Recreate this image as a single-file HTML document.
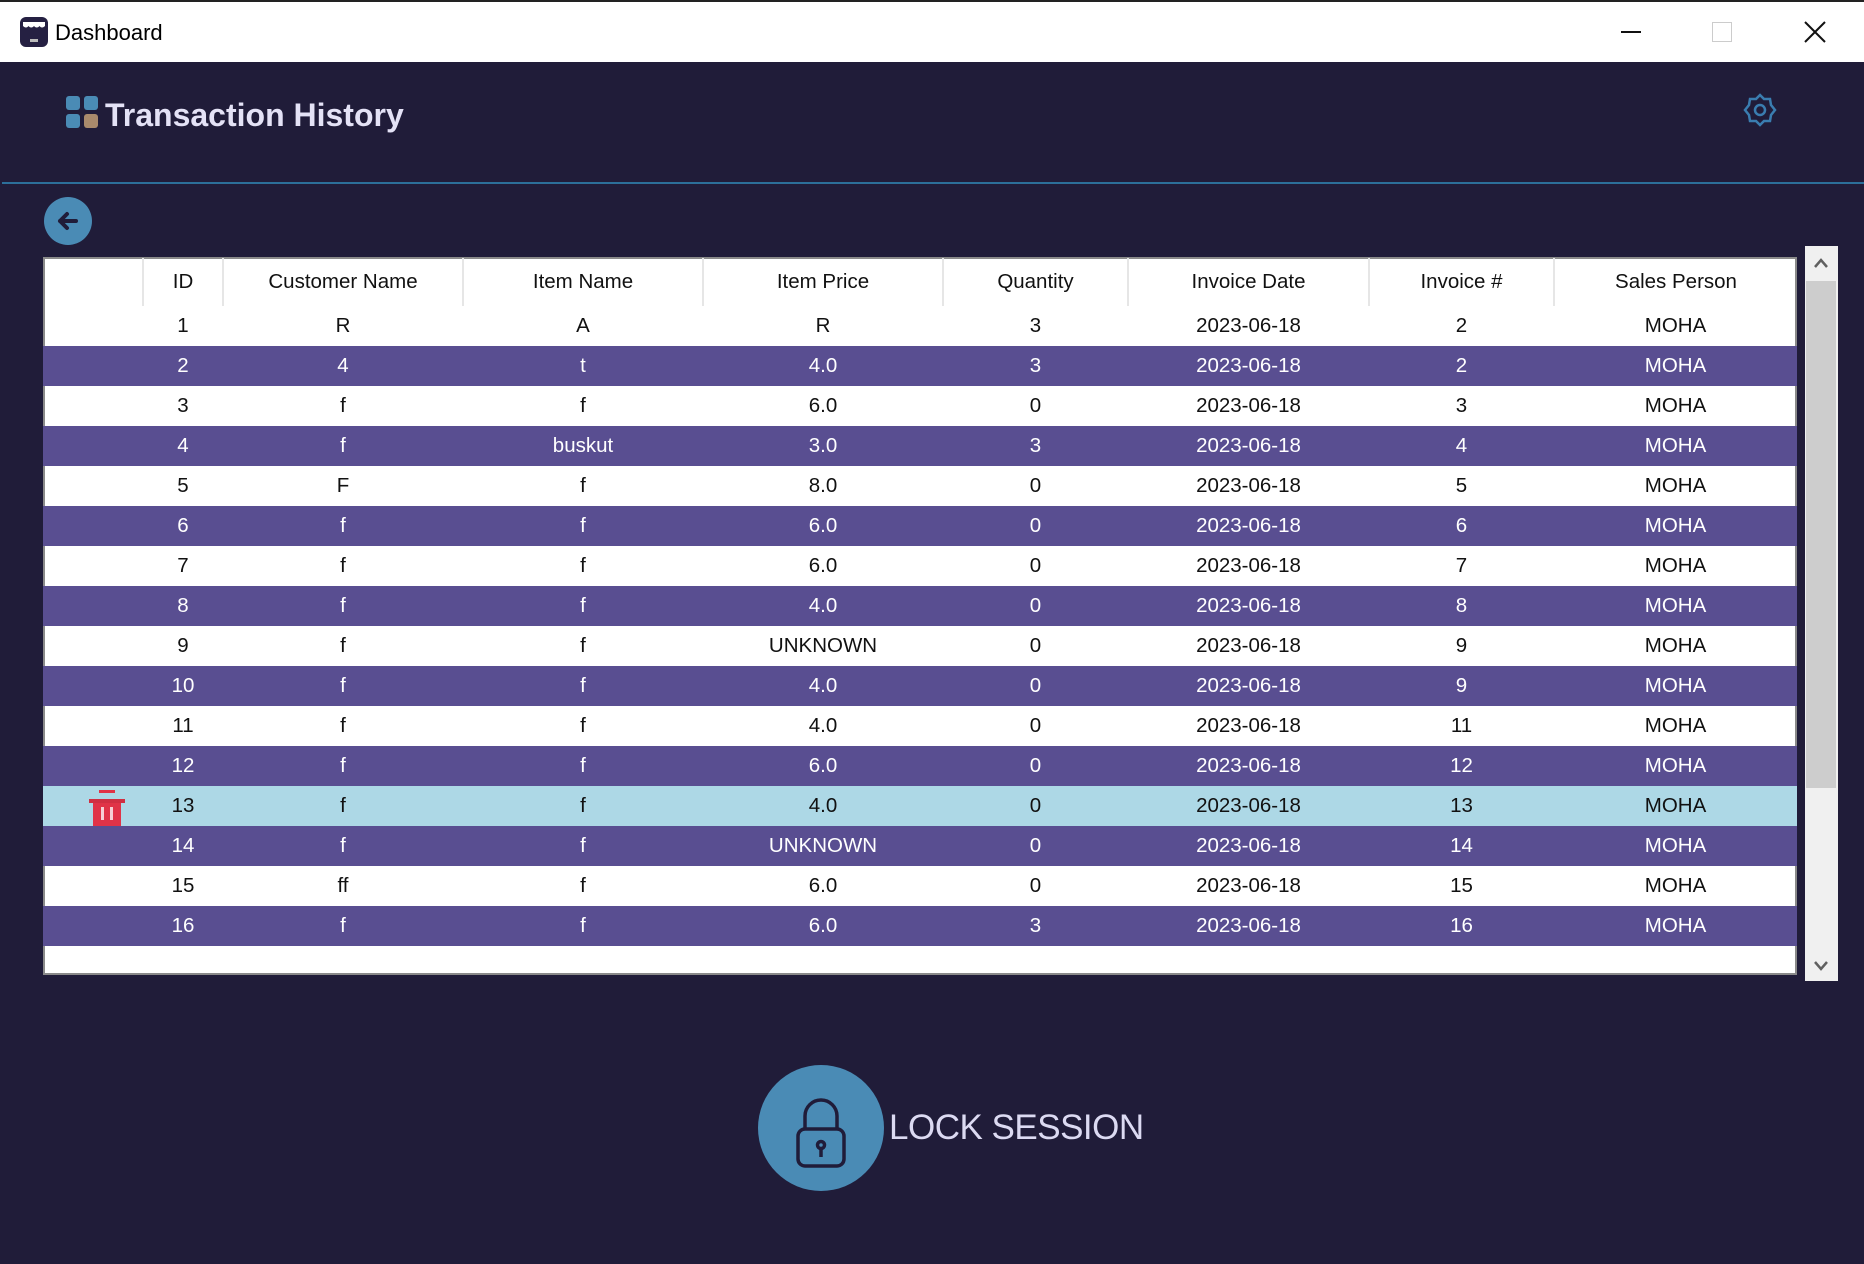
<!DOCTYPE html>
<html><head><meta charset="utf-8"><style>
*{margin:0;padding:0;box-sizing:border-box}
body{width:1864px;height:1264px;background:#201c39;position:relative;overflow:hidden;font-family:"Liberation Sans",sans-serif}
.tb{position:absolute;left:0;top:0;width:1864px;height:62px;background:#fff;border-top:2px solid #222}
.tb .t{position:absolute;left:55px;top:18px;font-size:22px;color:#000}
.hdr{position:absolute;left:105px;top:97px;font-size:32px;font-weight:bold;color:#e4e2f6}
.line{position:absolute;left:2px;top:182px;width:1862px;height:2px;background:#2c6f9a}
table{position:absolute;left:43px;top:258px;width:1754px;border-collapse:collapse;font-size:20.5px;text-align:center}
.wrap{position:absolute;left:43px;top:257px;width:1754px;height:718px;background:#fff;border:2px solid #8a8a8a}
th{font-weight:normal;height:48px;color:#111;border-left:2px solid #e6e6e6}
th:first-child{border-left:none}
td{height:40px;color:#111}
tr.p td{background:#594e91;color:#fff}
tr.s td{background:#add8e6;color:#111}
.sb{position:absolute;left:1805px;top:246px;width:33px;height:735px;background:#f0f0f0}
.th{position:absolute;left:1806px;top:281px;width:30px;height:507px;background:#cdcdcd}
.lk{position:absolute;left:758px;top:1065px;width:126px;height:126px;border-radius:50%;background:#4a8bb5}
.lt{position:absolute;left:889px;top:1108px;font-size:35px;color:#dcdaf2;letter-spacing:-0.5px}
</style></head><body>
<div class="tb">
<svg style="position:absolute;left:19px;top:14px" width="30" height="32" viewBox="0 0 30 32"><rect x="1" y="1" width="28" height="30" rx="6" fill="#252042"/><path d="M4 6h22v4c-2 2-4 2-5.5 0-1.5 2-4 2-5.5 0-1.5 2-4 2-5.5 0-1.5 2-3.5 2-5.5 0z" fill="#fff"/><rect x="11" y="23" width="8" height="3" fill="#bbb"/></svg>
<div class="t">Dashboard</div>
<div style="position:absolute;left:1621px;top:29px;width:20px;height:2px;background:#111"></div>
<div style="position:absolute;left:1712px;top:20px;width:20px;height:20px;border:1px solid #ccc"></div>
<svg style="position:absolute;left:1804px;top:19px" width="22" height="22"><path d="M1 1L21 21M21 1L1 21" stroke="#111" stroke-width="2"/></svg>
</div>
<svg style="position:absolute;left:66px;top:96px" width="33" height="33"><rect x="0" y="0" width="14" height="14" rx="3" fill="#4a8bb5"/><rect x="18" y="0" width="14" height="14" rx="3" fill="#4a8bb5"/><rect x="0" y="18" width="14" height="14" rx="3" fill="#4a8bb5"/><rect x="18" y="18" width="14" height="14" rx="3" fill="#a98a6c"/></svg>
<div class="hdr">Transaction History</div>
<svg style="position:absolute;left:1743px;top:93px" width="34" height="34" viewBox="0 0 34 34" fill="none" stroke="#3a7db0" stroke-width="2.5"><path d="M17 2l4 4 6 0 1 6 4 5-4 5-1 6-6 0-4 4-4-4-6 0-1-6-4-5 4-5 1-6 6 0z"/><circle cx="17" cy="17" r="5"/></svg>
<div class="line"></div>
<svg style="position:absolute;left:44px;top:197px" width="48" height="48"><circle cx="24" cy="24" r="24" fill="#4a8bb5"/><path d="M32 24H16M23 17l-7 7 7 7" stroke="#201c39" stroke-width="4" fill="none" stroke-linecap="round" stroke-linejoin="round"/></svg>
<div class="wrap"></div>
<table>
<colgroup><col style="width:100px"><col style="width:80px"><col style="width:240px"><col style="width:240px"><col style="width:240px"><col style="width:185px"><col style="width:241px"><col style="width:185px"><col></colgroup>
<tr><th></th><th>ID</th><th>Customer Name</th><th>Item Name</th><th>Item Price</th><th>Quantity</th><th>Invoice Date</th><th>Invoice #</th><th>Sales Person</th></tr>
<tr><td></td><td>1</td><td>R</td><td>A</td><td>R</td><td>3</td><td>2023-06-18</td><td>2</td><td>MOHA</td></tr>
<tr class="p"><td></td><td>2</td><td>4</td><td>t</td><td>4.0</td><td>3</td><td>2023-06-18</td><td>2</td><td>MOHA</td></tr>
<tr><td></td><td>3</td><td>f</td><td>f</td><td>6.0</td><td>0</td><td>2023-06-18</td><td>3</td><td>MOHA</td></tr>
<tr class="p"><td></td><td>4</td><td>f</td><td>buskut</td><td>3.0</td><td>3</td><td>2023-06-18</td><td>4</td><td>MOHA</td></tr>
<tr><td></td><td>5</td><td>F</td><td>f</td><td>8.0</td><td>0</td><td>2023-06-18</td><td>5</td><td>MOHA</td></tr>
<tr class="p"><td></td><td>6</td><td>f</td><td>f</td><td>6.0</td><td>0</td><td>2023-06-18</td><td>6</td><td>MOHA</td></tr>
<tr><td></td><td>7</td><td>f</td><td>f</td><td>6.0</td><td>0</td><td>2023-06-18</td><td>7</td><td>MOHA</td></tr>
<tr class="p"><td></td><td>8</td><td>f</td><td>f</td><td>4.0</td><td>0</td><td>2023-06-18</td><td>8</td><td>MOHA</td></tr>
<tr><td></td><td>9</td><td>f</td><td>f</td><td>UNKNOWN</td><td>0</td><td>2023-06-18</td><td>9</td><td>MOHA</td></tr>
<tr class="p"><td></td><td>10</td><td>f</td><td>f</td><td>4.0</td><td>0</td><td>2023-06-18</td><td>9</td><td>MOHA</td></tr>
<tr><td></td><td>11</td><td>f</td><td>f</td><td>4.0</td><td>0</td><td>2023-06-18</td><td>11</td><td>MOHA</td></tr>
<tr class="p"><td></td><td>12</td><td>f</td><td>f</td><td>6.0</td><td>0</td><td>2023-06-18</td><td>12</td><td>MOHA</td></tr>
<tr class="s"><td><svg width="36" height="36" style="display:block;margin-left:46px;margin-top:4px"><rect x="10" y="0" width="16" height="3" fill="#e03347"/><rect x="0" y="9" width="36" height="4" fill="#d02f42"/><rect x="4" y="13" width="28" height="23" fill="#e03347"/><rect x="12" y="17" width="3" height="13" fill="#f5d0d5"/><rect x="21" y="17" width="3" height="13" fill="#f5d0d5"/></svg></td><td>13</td><td>f</td><td>f</td><td>4.0</td><td>0</td><td>2023-06-18</td><td>13</td><td>MOHA</td></tr>
<tr class="p"><td></td><td>14</td><td>f</td><td>f</td><td>UNKNOWN</td><td>0</td><td>2023-06-18</td><td>14</td><td>MOHA</td></tr>
<tr><td></td><td>15</td><td>ff</td><td>f</td><td>6.0</td><td>0</td><td>2023-06-18</td><td>15</td><td>MOHA</td></tr>
<tr class="p"><td></td><td>16</td><td>f</td><td>f</td><td>6.0</td><td>3</td><td>2023-06-18</td><td>16</td><td>MOHA</td></tr>
</table>
<div class="sb"></div><div class="th"></div>
<svg style="position:absolute;left:1813px;top:257px" width="16" height="12"><path d="M2 10L8 3l6 7" stroke="#606060" stroke-width="2.5" fill="none"/></svg>
<svg style="position:absolute;left:1813px;top:960px" width="16" height="12"><path d="M2 2L8 9l6-7" stroke="#606060" stroke-width="2.5" fill="none"/></svg>
<div class="lk"></div>
<svg style="position:absolute;left:758px;top:1065px" width="126" height="126" fill="none" stroke="#201c39" stroke-width="3.5"><path d="M47 64V51a16 16 0 0 1 32 0V64"/><rect x="40" y="64" width="46" height="37" rx="7"/><circle cx="63" cy="80" r="3.5"/><path d="M63 84v8"/></svg>
<div class="lt">LOCK SESSION</div>
</body></html>
